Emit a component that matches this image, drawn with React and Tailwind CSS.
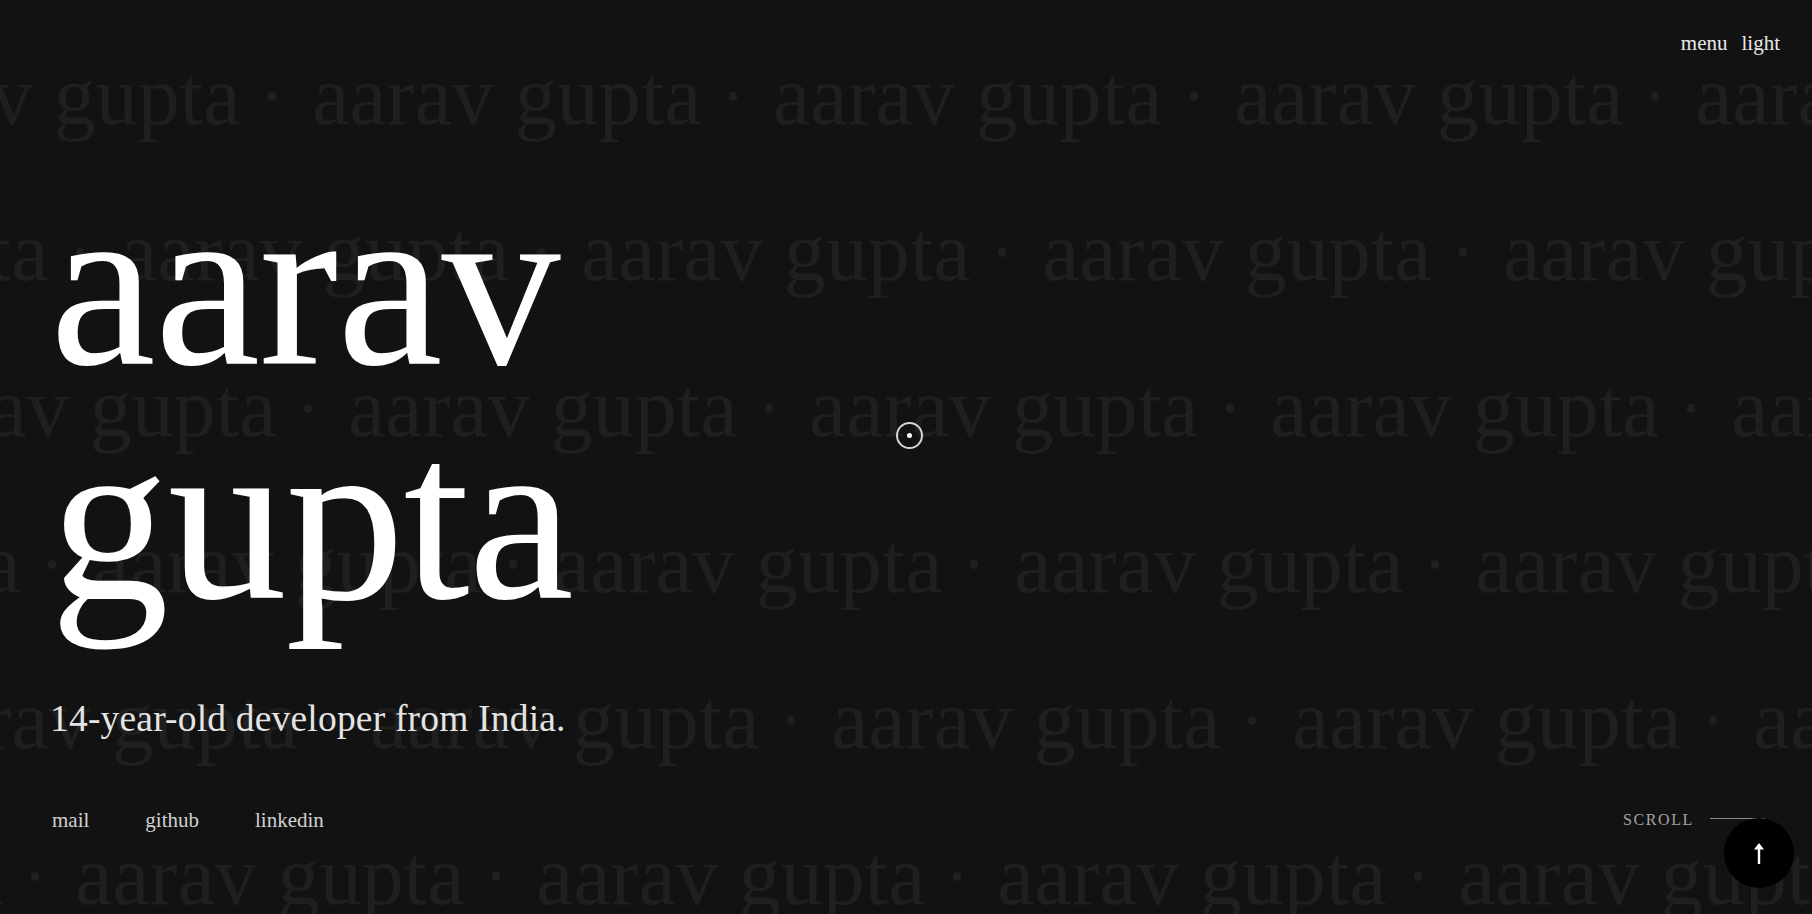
import React from 'react';

// background marquee rows: offset of first item in px
const rows = [
  'ml-[-149px]',
  'ml-[-341px]',
  'ml-[-113px]',
  'ml-[-369px]',
  'ml-[-91px]',
  'ml-[-386px]',
];

const MarqueeRow = ({ offset }) => (
  <div className={`flex-none h-[156px] flex items-center whitespace-nowrap ${offset}`}>
    {[0, 1, 2, 3, 4, 5].map((i) => (
      <div key={i} className="flex-none w-[461px] flex items-center">
        <span className="w-[381px] flex-none text-[84px] leading-none">aarav gupta</span>
        <span className="flex-1 flex justify-center">
          <span className="block w-[8px] h-[9px] rounded-full bg-[#1f1f1f]" />
        </span>
      </div>
    ))}
  </div>
);

const ArrowUp = () => (
  <svg width="12" height="22" viewBox="0 0 12 22" fill="white">
    <polygon points="1,7.5 6,1 11,7.5" />
    <rect x="4.8" y="6" width="2.4" height="16" />
  </svg>
);

export default function App() {
  return (
    <div className="relative w-full h-screen overflow-hidden bg-[#121212] font-['Liberation_Serif',serif]">
      {/* background name rows */}
      <div className="absolute inset-0 pt-[18px] flex flex-col text-[#1f1f1f] select-none pointer-events-none">
        {rows.map((r, i) => (
          <MarqueeRow key={i} offset={r} />
        ))}
      </div>

      {/* foreground */}
      <div className="relative h-full flex flex-col">
        {/* top nav */}
        <div className="flex justify-end gap-[14px] pt-[29px] pr-[32px] text-[21px] leading-[28px] text-[#e8e8e8]">
          <span>menu</span>
          <span>light</span>
        </div>

        {/* hero */}
        <div className="pl-[50px] mt-[110px]">
          <h1 className="text-[238px] leading-[234px] text-white tracking-[-0.005em]">
            <div>aarav</div>
            <div>gupta</div>
          </h1>
          <p className="mt-[62px] text-[37.5px] leading-[44px] text-[#e4e4e4] tracking-[0.005em]">
            14-year-old developer from India.
          </p>
        </div>

        {/* footer row */}
        <div className="mt-[65px] pl-[52px] pr-[47px] flex items-center justify-between">
          <div className="flex gap-[56px] text-[21px] leading-[28px] text-[#d0d0d0]">
            <span>mail</span>
            <span>github</span>
            <span>linkedin</span>
          </div>
          <div className="flex items-center gap-[16px]">
            <span className="text-[16px] leading-[28px] tracking-[0.1em] text-[#a3a3a3]">SCROLL</span>
            <span className="block w-[55px] h-px bg-[#8a8a8a] mt-[-3px]" />
          </div>
        </div>
      </div>

      {/* custom cursor */}
      <div className="absolute left-[896px] top-[422px] w-[27px] h-[27px] rounded-full border-2 border-[#d6d6d6] flex items-center justify-center">
        <span className="block w-[5px] h-[5px] rounded-full bg-white" />
      </div>

      {/* back to top */}
      <button className="absolute right-[18px] bottom-[26px] w-[70px] h-[70px] rounded-full bg-black flex items-center justify-center">
        <ArrowUp />
      </button>
    </div>
  );
}
